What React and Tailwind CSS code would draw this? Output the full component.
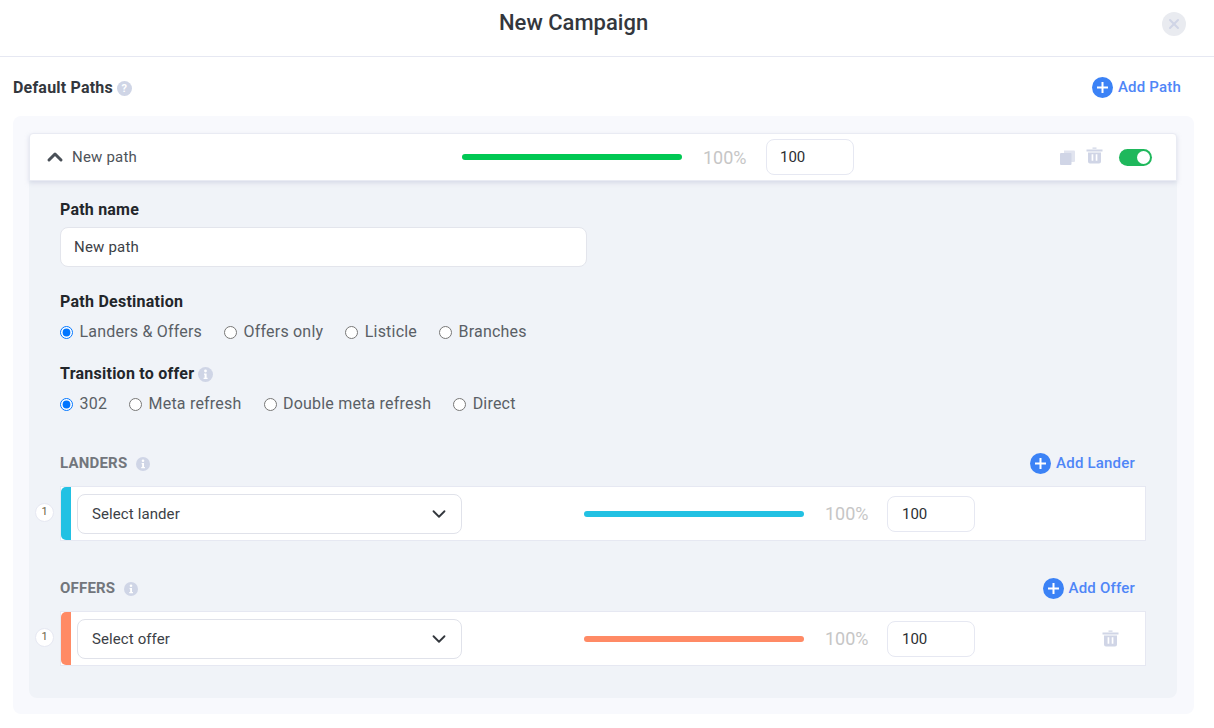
import React from 'react';
import { ChevronDown, ChevronUp, X } from 'lucide-react';

const PlusCircle = () => (
	<svg width="21" height="21" viewBox="0 0 21 21" className="shrink-0">
		<circle cx="10.5" cy="10.5" r="10.5" fill="#3b82f6" />
		<path d="M10.5 5v11M5 10.5h11" stroke="#fff" strokeWidth="2" />
	</svg>
);

const AddButton = ({ label }) => (
	<div className="flex items-center gap-[5px] text-[15px] font-medium tracking-[0.2px] text-[#4f86f7]">
		<PlusCircle />
		<span>{label}</span>
	</div>
);

const InfoIcon = ({ size = 15 }) => (
	<svg width={size} height={size} viewBox="0 0 15 15" className="shrink-0">
		<circle cx="7.5" cy="7.5" r="7.5" fill="#cfd5e6" />
		<circle cx="7.5" cy="4" r="1.4" fill="#fff" />
		<path d="M6 6.4h2.6v4.4h1v1.3H5.6v-1.3h1V7.7H6z" fill="#fff" />
	</svg>
);

const HelpIcon = () => (
	<span className="flex h-[15px] w-[15px] shrink-0 items-center justify-center rounded-full bg-[#cfd5e6] text-[11px] font-bold leading-none text-white">
		?
	</span>
);

const Trash = ({ className }) => (
	<svg width="17" height="17" viewBox="0 0 17 17" className={className}>
		<path
			fill="#d0d5e6"
			d="M6.5 0.5h4v1.2h-4zM0.5 2.6h16v1.8h-16zM2 5.4h13v9.1a2 2 0 0 1-2 2H4a2 2 0 0 1-2-2zM5.6 7.2v6.6h1.7V7.2zM9.7 7.2v6.6h1.7V7.2z"
			fillRule="evenodd"
		/>
	</svg>
);

const Copy = () => (
	<svg width="15" height="15" viewBox="0 0 15 15">
		<path fill="#e1e4ef" d="M4 0.5h10a1 1 0 0 1 1 1V11a1 1 0 0 1-1 1H4z" />
		<path fill="#d0d5e6" d="M1 3h9.5a1 1 0 0 1 1 1v10a1 1 0 0 1-1 1H1a1 1 0 0 1-1-1V4a1 1 0 0 1 1-1z" />
	</svg>
);

const Radio = ({ label, checked }) => (
	<label className="flex items-center gap-[6.5px] text-[16px] leading-none tracking-[0.2px] text-[#5a5f66]">
		<input type="radio" readOnly checked={checked} className="m-0 h-[13px] w-[13px] accent-[#0075ff]" />
		<span>{label}</span>
	</label>
);

const Share = ({ color, inputPlace }) => (
	<div className="flex items-center">
		<div className={`h-[6px] w-[220px] rounded-full ${color}`}></div>
		<span className="ml-[21px] w-[43px] text-[18px] text-[#c6c6c6]">100%</span>
		<div className={`flex h-[36px] w-[88px] items-center rounded-[8px] border border-[#e6e8f2] bg-white pt-[1px] text-[15px] text-[#2c2f33] ${inputPlace}`}>
			100
		</div>
	</div>
);

const Row = ({ accent, bar, label, canDelete }) => (
	<div className="relative flex h-[55px] items-center border border-[#e6e8f2] bg-white">
		<span className="absolute left-[-26px] top-[16px] flex h-[19px] w-[19px] items-center justify-center rounded-full border border-[#e6e8f2] bg-white text-[11px] text-[#6b5f45]">
			1
		</span>
		<div className={`h-full w-[10px] rounded-l-[5px] ${accent}`}></div>
		<div className="ml-[6px] flex h-[40px] w-[385px] items-center justify-between rounded-[8px] border border-[#e0e2ea] bg-white pl-[14px] pr-[11px] text-[15px] tracking-[0.1px] text-[#3c4146]">
			<span className="pt-[1px]">{label}</span>
			<ChevronDown size={22} strokeWidth={2} className="text-[#33373d]" />
		</div>
		<div className="ml-[122px]">
			<Share color={bar} inputPlace="ml-[19px] pl-[14px]" />
		</div>
		{canDelete && <Trash className="ml-[127px]" />}
	</div>
);

const SectionHead = ({ title, add }) => (
	<div className="flex h-[25px] items-center justify-between pr-[11px]">
		<div className="flex items-center gap-[9px] text-[15px] font-bold tracking-[0.2px] text-[#72767c]">
			<span>{title}</span>
			<InfoIcon size={14} />
		</div>
		<AddButton label={add} />
	</div>
);

export default function App() {
	return (
		<div className="h-[728px] w-[1214px] overflow-hidden bg-white font-['Roboto',sans-serif]">
			<div className="flex h-[57px] items-center border-b border-[#e6e8f2] pr-[28px]">
				<h1 className="ml-[499px] pb-[12px] text-[22px] font-medium text-[#33373d]">New Campaign</h1>
				<div className="ml-auto mb-[9px] flex h-[24px] w-[24px] items-center justify-center rounded-full bg-[#e9ebf0]">
					<X size={16} strokeWidth={3} className="text-[#d0d5e6]" />
				</div>
			</div>

			<div className="flex h-[59px] items-center justify-between pl-[13px] pr-[33px] pt-[2px]">
				<div className="mt-[1px] flex items-center gap-[4px] text-[16px] font-bold tracking-[0.2px] text-[#33373d]">
					<span>Default Paths</span>
					<HelpIcon />
				</div>
				<AddButton label="Add Path" />
			</div>

			<div className="mx-[13px] w-[1181px] rounded-[8px] bg-[#f8f9fd] px-[16px] pb-[16px] pt-[17px]">
				<div className="h-[565px] w-[1148px] rounded-[8px] bg-[#f0f3f8]">
					<div className="flex h-[48px] items-center rounded-t-[4px] border border-[#e9ebf3] bg-white shadow-[0_2px_4px_rgba(190,195,215,0.5)]">
						<ChevronUp size={24} strokeWidth={3} className="ml-[13px] text-[#4a5058]" />
						<span className="ml-[5px] w-[390px] pt-[1px] text-[15px] tracking-[0.2px] text-[#4e5359]">New path</span>
						<Share color="bg-[#00c853]" inputPlace="ml-[20px] pl-[13px]" />
						<div className="ml-[206px] mt-[1px] flex items-center gap-[11px]">
							<Copy />
							<Trash className="-mt-[4px]" />
						</div>
						<div className="ml-[16px] flex h-[17px] w-[33px] items-center justify-end rounded-full bg-[#1fb85c] pr-[2px]">
							<span className="h-[13px] w-[13px] rounded-full bg-white"></span>
						</div>
					</div>

					<div className="pl-[31px] pr-[31px]">
						<div className="mt-[19px] text-[16px] font-bold leading-[20px] tracking-[0.2px] text-[#23262b]">Path name</div>
						<div className="mt-[7px] flex h-[40px] w-[527px] items-center rounded-[8px] border border-[#e3e5ec] bg-white pl-[13px] text-[15px] tracking-[0.2px] text-[#3c4146]">
							New path
						</div>

						<div className="mt-[25px] text-[16px] font-bold leading-[20px] tracking-[0.25px] text-[#23262b]">Path Destination</div>
						<div className="mt-[10px] flex h-[20px] items-center gap-[22px]">
							<Radio label="Landers & Offers" checked />
							<Radio label="Offers only" />
							<Radio label="Listicle" />
							<Radio label="Branches" />
						</div>

						<div className="mt-[22px] flex items-center gap-[4px] text-[16px] font-bold leading-[20px] tracking-[0.25px] text-[#23262b]">
							<span>Transition to offer</span>
							<InfoIcon />
						</div>
						<div className="mt-[10px] flex h-[20px] items-center gap-[22px]">
							<Radio label="302" checked />
							<Radio label="Meta refresh" />
							<Radio label="Double meta refresh" />
							<Radio label="Direct" />
						</div>

						<div className="mt-[37px]">
							<SectionHead title="LANDERS" add="Add Lander" />
							<div className="mt-[10px]">
								<Row accent="bg-[#22c1e3]" bar="bg-[#22c1e3]" label="Select lander" />
							</div>
						</div>
						<div className="mt-[35px]">
							<SectionHead title="OFFERS" add="Add Offer" />
							<div className="mt-[10px]">
								<Row accent="bg-[#ff8a65]" bar="bg-[#ff8a65]" label="Select offer" canDelete />
							</div>
						</div>
					</div>
				</div>
			</div>
		</div>
	);
}
